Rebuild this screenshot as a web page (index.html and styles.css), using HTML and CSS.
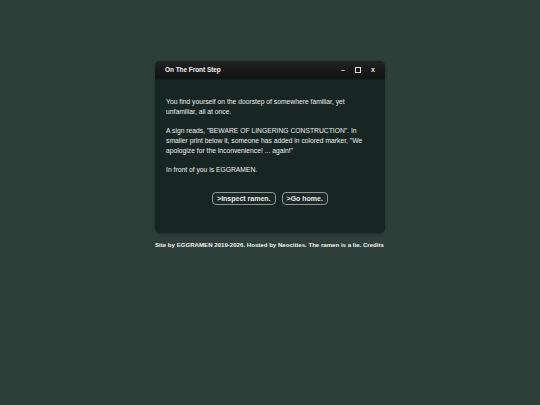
FILE: index.html
```html
<!DOCTYPE html>
<html>
<head>
<meta charset="utf-8">
<link rel="stylesheet" href="styles.css">
</head>
<body>
<div class="page">
  <div class="window">
    <div class="titlebar">
      <span class="title">On The Front Step</span>
      <div class="controls">
        <span class="ctl min">&ndash;</span>
        <span class="ctl max"><span class="box"></span></span>
        <span class="ctl close">x</span>
      </div>
    </div>
    <div class="content">
      <p>You find yourself on the doorstep of somewhere familiar, yet unfamiliar, all at once.</p>
      <p>A sign reads, "BEWARE OF LINGERING CONSTRUCTION". In smaller print below it, someone has added in colored marker, "We apologize for the inconvenience! ... again!"</p>
      <p>In front of you is EGGRAMEN.</p>
      <div class="actions">
        <button class="btn">&gt;Inspect ramen.</button>
        <button class="btn">&gt;Go home.</button>
      </div>
    </div>
  </div>
  <div class="footer">Site by EGGRAMEN 2019-2026. Hosted by Neocities. The ramen is a lie. <a href="#">Credits</a></div>
</div>
</body>
</html>
```
FILE: styles.css
```css
html, body {
  margin: 0;
  padding: 0;
  background: #2e3f3a;
  font-family: "Liberation Sans", Arial, sans-serif;
  color: #ecefee;
}
.page {
  display: flex;
  flex-direction: column;
  align-items: center;
  padding-top: 61px;
}
.window {
  width: 230px;
  background: #182623;
  border-radius: 5px;
  overflow: hidden;
  box-shadow: 0 1px 3px rgba(0,0,0,0.35);
}
.titlebar {
  height: 17px;
  background: linear-gradient(#222222, #121212);
  display: flex;
  align-items: center;
  justify-content: space-between;
  padding: 0 9px 0 10px;
  box-shadow: 0 1px 2px rgba(0,0,0,0.5);
}
.title {
  font-size: 6.4px;
  font-weight: bold;
  color: #f2f2f2;
}
.controls {
  display: flex;
  align-items: center;
  gap: 9px;
}
.ctl {
  font-size: 7px;
  font-weight: bold;
  color: #e6e6e6;
  width: 6px;
  text-align: center;
  display: flex;
  justify-content: center;
}
.box {
  width: 4px;
  height: 4px;
  border: 1px solid #ddd;
  display: block;
}
.content {
  padding: 19px 11px 28px 11px;
}
.content p {
  margin: 0 0 9px 0;
  font-size: 6.75px;
  line-height: 10px;
}
.actions {
  display: flex;
  justify-content: center;
  gap: 6px;
  margin-top: 17px;
}
.btn {
  font-family: "Liberation Sans", Arial, sans-serif;
  font-size: 7px;
  font-weight: bold;
  color: #e8ecea;
  background: #1c2a27;
  border: 1px solid #8d9995;
  border-radius: 4px;
  height: 13px;
  padding: 0 4px;
  line-height: 11px;
}
.footer {
  margin-top: 8px;
  width: 230px;
  font-size: 6.1px;
  font-weight: bold;
  color: #f0f2f1;
  white-space: nowrap;
}
.footer a {
  color: #f0f2f1;
  text-decoration: underline;
}
```
